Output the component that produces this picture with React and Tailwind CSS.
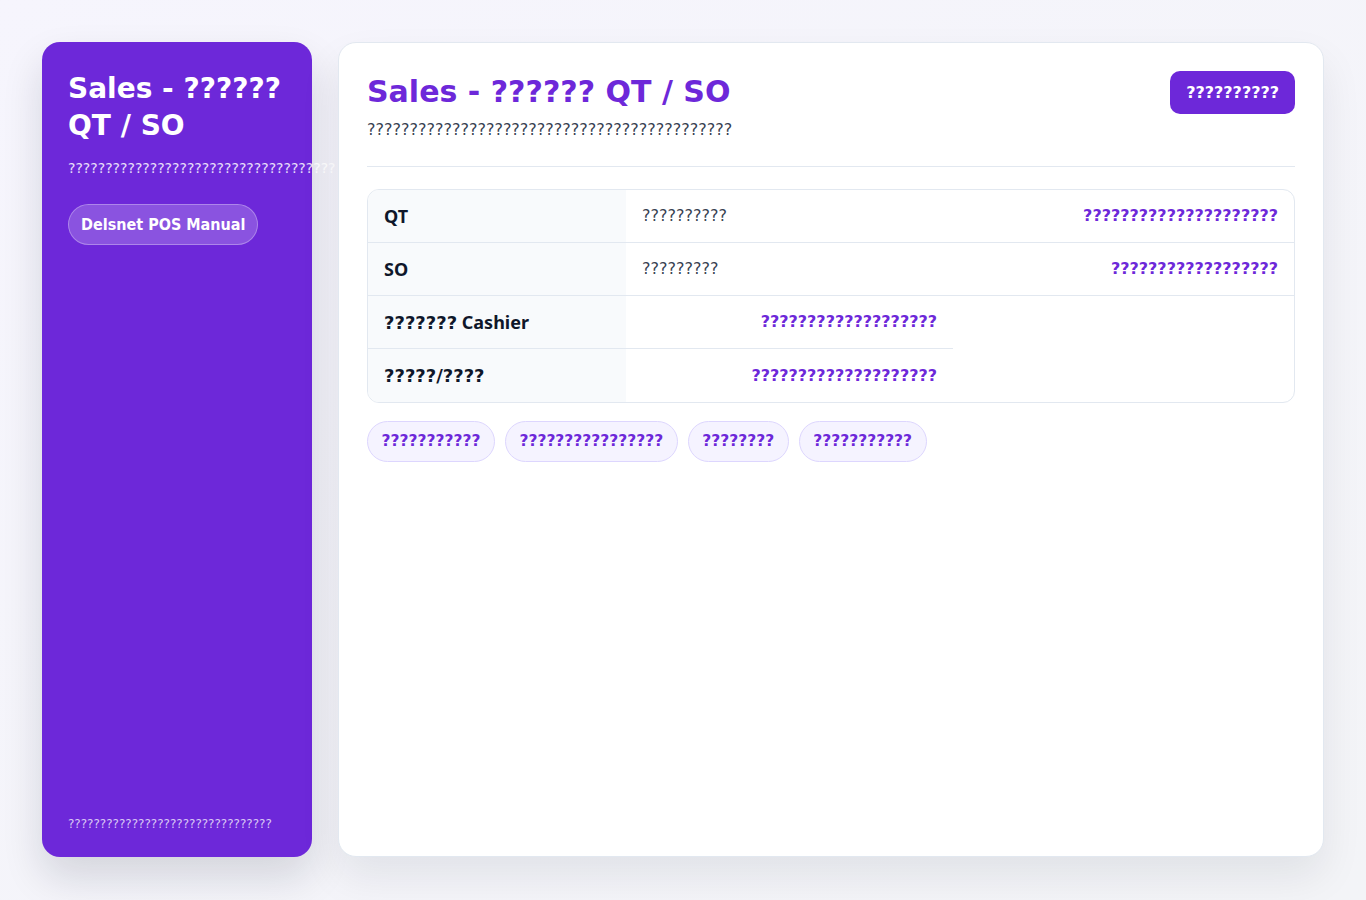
import React from "react"

const q = (n) => "?".repeat(n)

const rows = [
  { label: "QT", desc: q(10), value: q(21) },
  { label: "SO", desc: q(9), value: q(18) },
]

const rowsShort = [
  { label: <span><span className="font-['DejaVu_Sans',sans-serif]">{q(7)}</span> Cashier</span>, value: q(19) },
  { label: <span className="font-['DejaVu_Sans',sans-serif]">{q(5) + "/" + q(4)}</span>, value: q(20) },
]

const chips = [q(11), q(16), q(8), q(11)]

export default function App() {
  return (
    <div className="min-h-screen bg-gradient-to-br from-[#f6f5fd] to-[#f3f4f7] p-[42px] font-['DejaVu_Sans',sans-serif]">
      <div className="flex gap-[26px] h-[815px]">
        {/* sidebar */}
        <aside className="w-[270px] shrink-0 rounded-[18px] bg-[#6d28d9] px-[26px] pt-[28px] pb-[24px] text-white flex flex-col shadow-[0_20px_40px_rgba(17,24,39,0.14)]">
          <h1 className="text-[28px] leading-[37px] font-bold">Sales - {q(6)} QT / SO</h1>
          <p className="mt-[14px] text-[14px] leading-5 text-white/85 whitespace-nowrap">{q(36)}</p>
          <div className="mt-[26px]">
            <button className="h-[41px] px-[12px] rounded-full bg-white/20 border border-white/30 text-[16px] font-bold font-['DejaVu_Sans_Condensed','DejaVu_Sans',sans-serif]">
              Delsnet POS Manual
            </button>
          </div>
          <p className="mt-auto text-[12px] text-white/75 whitespace-nowrap">{q(32)}</p>
        </aside>

        {/* main card */}
        <main className="flex-1 rounded-[18px] bg-white border border-[#e2e8f0] px-[28px] pt-[28px] shadow-[0_20px_40px_rgba(17,24,39,0.08)]">
          <div className="flex items-start justify-between">
            <div>
              <h2 className="text-[30px] leading-[40px] font-bold text-[#6d28d9] mt-[1px]">Sales - {q(6)} QT / SO</h2>
              <p className="mt-[6px] text-[16px] leading-6 text-[#374151]">{q(43)}</p>
            </div>
            <button className="h-[43px] px-[16px] rounded-[10px] bg-[#6d28d9] text-white text-[16px] font-bold">
              {q(10)}
            </button>
          </div>

          <div className="mt-[24px] border-t border-[#e2e8f0]" />

          <div className="mt-[22px] rounded-[12px] border border-[#e2e8f0] overflow-hidden">
            {rows.map((r) => (
              <div key={r.label} className="grid grid-cols-[258px_327px_1fr] h-[53px] border-b border-[#e2e8f0]">
                <div className="bg-[#f8fafc] px-[16px] flex items-center font-['Noto_Sans',sans-serif] font-bold text-[18px] text-[#0f172a]">{r.label}</div>
                <div className="px-[16px] flex items-center text-[16px] text-[#374151]">{r.desc}</div>
                <div className="px-[16px] flex items-center justify-end text-[16px] font-bold text-[#6d28d9]">{r.value}</div>
              </div>
            ))}
            {rowsShort.map((r, i) => (
              <div key={i} className="grid grid-cols-[258px_327px_1fr] h-[53px]">
                <div className={`bg-[#f8fafc] px-[16px] flex items-center font-['Noto_Sans',sans-serif] font-bold text-[18px] text-[#0f172a] ${i === 0 ? "border-b border-[#e2e8f0]" : ""}`}>{r.label}</div>
                <div className={`px-[16px] flex items-center justify-end text-[16px] font-bold text-[#6d28d9] ${i === 0 ? "border-b border-[#e2e8f0]" : ""}`}>{r.value}</div>
                <div />
              </div>
            ))}
          </div>

          <div className="mt-[18px] flex gap-[10px]">
            {chips.map((c, i) => (
              <span key={i} className="h-[41px] px-[13.5px] flex items-center rounded-full bg-[#f5f3ff] border border-[#ddd6fe] text-[#6d28d9] text-[15.5px] font-bold">
                {c}
              </span>
            ))}
          </div>
        </main>
      </div>
    </div>
  )
}
